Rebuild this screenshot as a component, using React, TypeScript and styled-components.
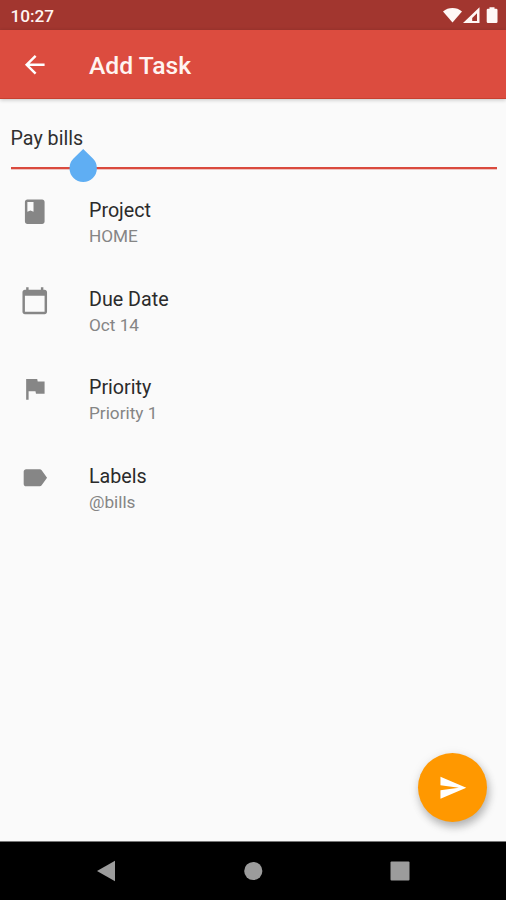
import React from 'react';
import styled, { createGlobalStyle } from 'styled-components';

const GlobalStyle = createGlobalStyle`
  *, *::before, *::after { box-sizing: border-box; }
  html, body { margin: 0; padding: 0; }
  body { background: #fafafa; font-family: Roboto, "Liberation Sans", sans-serif; }
  p, h1 { margin: 0; }
`;

const Screen = styled.div`
  width: 506px;
  height: 900px;
  display: flex;
  flex-direction: column;
  background: #fafafa;
  overflow: hidden;
`;

const StatusBar = styled.header`
  flex: none;
  height: 30px;
  display: flex;
  align-items: center;
  justify-content: space-between;
  padding: 2px 7px 0 10.5px;
  background: #a2362f;
  color: #fff4f2;
`;

const Clock = styled.span`
  font-size: 17.2px;
  font-weight: 500;
  line-height: 20px;
`;

const StatusIcons = styled.svg`
  display: block;
  width: 56px;
  height: 20px;
  fill: #fff8f6;
`;

const AppBar = styled.div`
  flex: none;
  height: 69px;
  display: flex;
  align-items: center;
  padding: 1px 0 0 20.3px;
  gap: 39.2px;
  background: #dc4c3f;
  border-bottom: 1px solid #c8402f;
  color: #fff;
  box-shadow: 0 1px 4px rgba(0, 0, 0, 0.22);
`;

const Title = styled.h1`
  padding-top: 3px;
  font-size: 24.7px;
  font-weight: 500;
  line-height: 30px;
  color: #fff4f1;
`;

const BareButton = styled.button`
  display: flex;
  padding: 0;
  border: 0;
  background: none;
  color: inherit;
`;

const Glyph = styled.svg`
  display: block;
  flex: none;
  width: 29.5px;
  height: 29.5px;
  fill: currentColor;
`;

const Content = styled.main`
  flex: 1;
  position: relative;
`;

const Field = styled.div`
  position: relative;
  height: 70px;
  margin: 0 9.5px 0 10.5px;
  padding-top: 28px;
  border-bottom: 2px solid #da4a3e;
  box-shadow: 0 1px 0 rgba(218, 74, 62, 0.3);
  color: #303030;
  font-size: 19.7px;
  line-height: 24px;
`;

const CursorHandle = styled.svg`
  position: absolute;
  left: 58px;
  top: 49px;
  width: 29px;
  height: 34px;
  fill: #5faef3;
`;

const List = styled.div`
  display: flex;
  flex-direction: column;
  padding-top: 28px;
`;

const Row = styled.div`
  height: 88.6px;
  display: flex;
  align-items: flex-start;
  padding-left: 20.2px;
  gap: 39.3px;
  color: #868686;
`;

const RowText = styled.div`
  display: flex;
  flex-direction: column;
  gap: 2px;
  padding-top: 2px;
`;

const RowTitle = styled.p`
  font-size: 19.7px;
  line-height: 24px;
  color: #2b2b2b;
`;

const RowValue = styled.p`
  font-size: 17.2px;
  line-height: 22px;
  color: #858585;
`;

const SendButton = styled.button`
  position: absolute;
  right: 19px;
  bottom: 19px;
  width: 69px;
  height: 69px;
  display: flex;
  align-items: center;
  justify-content: center;
  padding: 0;
  border: 0;
  border-radius: 50%;
  background: #ff9800;
  color: #fff;
  box-shadow: 2px 5px 8px rgba(0, 0, 0, 0.25), 0 2px 12px rgba(0, 0, 0, 0.08);
`;

const NavBar = styled.nav`
  flex: none;
  height: 59px;
  display: flex;
  align-items: center;
  justify-content: space-between;
  padding: 0 96.5px 0 96px;
  background: #000;
  border-top: 1px solid #777;
`;

const NavIcon = styled.svg`
  display: block;
  width: 20px;
  height: 22px;
  fill: #9c9c9c;
`;

const rows = [
  {
    title: 'Project',
    value: 'HOME',
    icon: 'M18 2H6c-1.100 0-2 .9-2 2v16c0 1.100.9 2 2 2h12c1.100 0 2-.9 2-2V4c0-1.100-.9-2-2-2zM6 4h5v8l-2.500-1L6 12V4z',
  },
  {
    title: 'Due Date',
    value: 'Oct 14',
    icon: 'M20 3h-1V1h-2v2H7V1H5v2H4c-1.1 0-2 .9-2 2v16c0 1.1.9 2 2 2h16c1.1 0 2-.9 2-2V5c0-1.1-.9-2-2-2zm0 18H4V8h16v13z',
  },
  {
    title: 'Priority',
    value: 'Priority 1',
    icon: 'M14.4 6L14 4H5v17h2v-7h5.6l.4 2h7V6z',
  },
  {
    title: 'Labels',
    value: '@bills',
    icon: 'M17.63 5.84C17.27 5.33 16.67 5 16 5L5 5.01C3.9 5.01 3 5.9 3 7v10c0 1.1.9 1.99 2 1.99L16 19c.67 0 1.27-.33 1.63-.84L22 12l-4.37-6.16z',
  },
];

function Icon({ d }: { d: string }) {
  return (
    <Glyph viewBox="0 0 24 24" aria-hidden="true">
      <path d={d} />
    </Glyph>
  );
}

export default function App() {
  return (
    <>
      <GlobalStyle />
      <Screen>
        <StatusBar>
          <Clock>10:27</Clock>
          <StatusIcons viewBox="0 0 56 20" aria-hidden="true">
            <path d="M0 5.4C5.4.9 13.6.9 19 5.4L9.5 16.500z" />
            <path fillRule="evenodd" d="M20 17L36.500 1.200V17zM34 7.200L29.200 11.900V15H34z" />
            <path d="M46.500 1.200h5v1.600h1.700q1.300 0 1.300 1.300v11.600q0 1.300-1.300 1.300h-8.200q-1.300 0-1.300-1.300v-11.600q0-1.300 1.300-1.300h1.500z" />
          </StatusIcons>
        </StatusBar>
        <AppBar>
          <BareButton aria-label="Back">
            <Icon d="M20 11H7.83l5.59-5.59L12 4l-8 8 8 8 1.41-1.41L7.83 13H20v-2z" />
          </BareButton>
          <Title>Add Task</Title>
        </AppBar>
        <Content>
          <Field>
            Pay bills
            <CursorHandle viewBox="0 0 29 34" aria-hidden="true">
              <path d="M14.200 1L23.900 10.600A13.700 13.700 0 1 1 4.500 10.600z" />
            </CursorHandle>
          </Field>
          <List>
            {rows.map((row) => (
              <Row key={row.title}>
                <Icon d={row.icon} />
                <RowText>
                  <RowTitle>{row.title}</RowTitle>
                  <RowValue>{row.value}</RowValue>
                </RowText>
              </Row>
            ))}
          </List>
          <SendButton aria-label="Send">
            <Icon d="M2.01 21L23 12 2.01 3 2 10l15 2-15 2z" />
          </SendButton>
        </Content>
        <NavBar>
          <NavIcon viewBox="0 0 20 22" aria-hidden="true">
            <path d="M1 11L19 .8V21.200z" />
          </NavIcon>
          <NavIcon viewBox="0 0 20 22" aria-hidden="true">
            <circle cx="10.300" cy="11" r="9.100" />
          </NavIcon>
          <NavIcon viewBox="0 0 20 22" aria-hidden="true">
            <rect x=".5" y="1.500" width="19" height="19" rx="1" />
          </NavIcon>
        </NavBar>
      </Screen>
    </>
  );
}
